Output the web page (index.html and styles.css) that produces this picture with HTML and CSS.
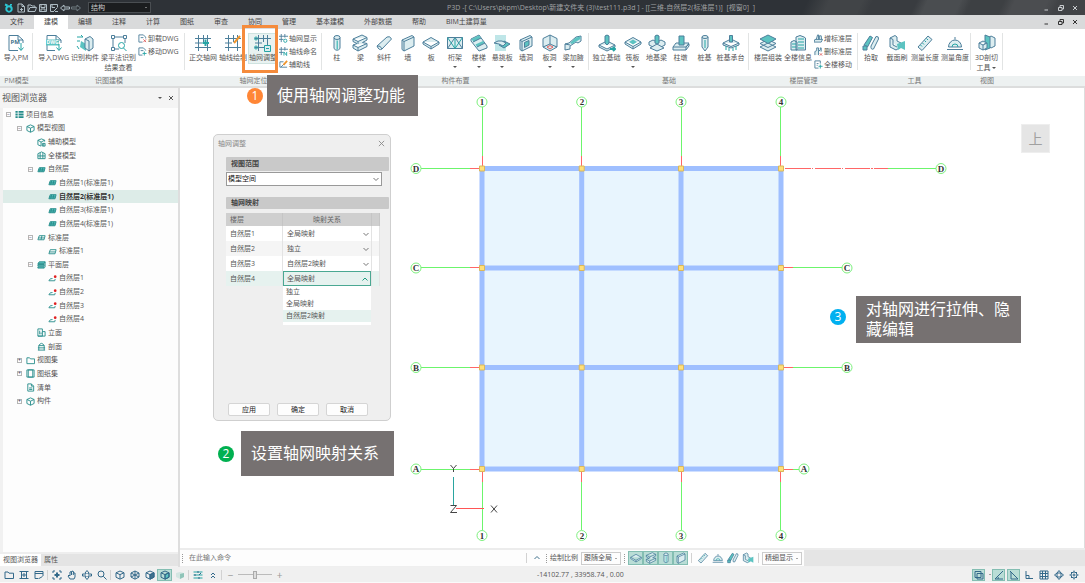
FILE: index.html
```
<!DOCTYPE html>
<html lang="zh-CN">
<head>
<meta charset="utf-8">
<title>P3D</title>
<link rel="stylesheet" href="styles.css">
</head>
<body>
<svg class="defs" aria-hidden="true">
  <symbol id="chev" viewBox="0 0 8 8"><path d="M1.500 3L4 5.500 6.500 3"/></symbol>
  <symbol id="cube" viewBox="0 0 10 10"><path d="M5 1L9 2.800V7.200L5 9.200 1 7.200V2.800ZM1 2.800L5 4.600 9 2.800M5 4.600V9"/></symbol>
  <symbol id="layer" viewBox="0 0 10 10"><path class="tl" d="M1 7.500L2.500 3H9L7.800 7.500Z"/><path d="M1.500 5.500H8M4 3L3 7.500M6.500 3L5.500 7.500"/></symbol>
  <symbol id="plan" viewBox="0 0 10 10"><path d="M1 7.500H7.500L8 5.500M1 7.500Q2 4.500 5 5"/><circle class="red" cx="8" cy="3" r="1.500"/></symbol>
  <symbol id="ruler" viewBox="0 0 18 18"><path class="lt" d="M2 13L12 2 16 5.500 6 16.500Z"/><path class="t" d="M4.500 11L6 12.500M6.500 9L8 10.500M8.500 6.500L10 8M10.500 4.500L12 6"/></symbol>
  <symbol id="protractor" viewBox="0 0 18 18"><path class="lt" d="M2.500 13A6.500 7 0 0 1 15.500 13ZM9 5.500V3M1 15.500H17"/><path class="t" d="M6 13A3 3 0 0 1 12 13"/></symbol>
  <symbol id="pick" viewBox="0 0 18 18"><path class="tl" d="M2 11L8 2 10.500 3.500 5.500 13Z"/><path class="lt" d="M9 12L14 2.500Q17 2 16.500 5L11.500 15Q8.500 16 9 12Z"/><path class="tl" d="M1 12H5V16H1Z"/></symbol>
  <symbol id="brush" viewBox="0 0 18 18"><path class="lt" d="M2 4L7 1.500 9 3V7L13 9V13L8 16 2 13ZM2 4L5 5.500V11L9 13"/><path class="tl ns" d="M9 10L17 7V16L13 14 10 16Z"/></symbol>
  <symbol id="column" viewBox="0 0 18 18"><path class="lt" d="M6 3.500V14.500Q9 18 12 14.500V3.500"/><ellipse class="lt" cx="9" cy="3.500" rx="3" ry="2"/><path class="tl ns" d="M8.500 6.500H10V15.500H8.500Z"/></symbol>
  <symbol id="beam" viewBox="0 0 18 18"><path class="lt" d="M2 5L11 1 16 3.500V6L11.500 8.500 16 9.500V12.500L7 17 2 14V11L6 9.500 2 7.500ZM2 5L7 7.500 16 3.500M7 7.500V10M2 11L7 13.500 16 9.500M7 13.500V17"/></symbol>
  <symbol id="slab" viewBox="0 0 18 18"><path class="lt" d="M1 8L9 3.500 17 8V10L9 15 1 10ZM1 8L9 12.500 17 8M9 12.500V15"/></symbol>
  <symbol id="wall" viewBox="0 0 18 18"><path class="lt" d="M3 6L13 1.500 15 3V12L5 17 3 15.500ZM3 6L5 7.500V17M5 7.500L15 3"/></symbol>
  <symbol id="axis" viewBox="0 0 10 10"><path d="M0 2.500H10M0 6H5M2.500 0V9M6.500 0V4"/></symbol>
  <symbol id="grid" viewBox="0 0 18 18"><path d="M1 4.500H17M1 13.500H17M4.500 1V17M13.500 1V17M9.500 1V8M1 9H8"/></symbol>
  <symbol id="folder" viewBox="0 0 10 10"><path d="M1 2H4L5 3.200H9.500V8.500H1Z"/></symbol>
  <symbol id="doc" viewBox="0 0 10 10"><path d="M2 1H6L8.500 3.500V9H2ZM6 1V3.500H8.500M3.500 5.500H7M3.500 7.200H7"/></symbol>
</svg>

<header class="titlebar">
  <nav class="quick" aria-label="快速访问">
    <svg class="logo" viewBox="0 0 10 10"><path d="M1 1.500L3.500 2.500M5 6m-2.700 0a2.700 2.700 0 1 0 5.400 0a2.700 2.700 0 1 0 -5.400 0M7 1V2.500"/></svg>
    <button aria-label="新建"><svg viewBox="0 0 10 10"><path d="M2 1H6L8.500 3.500V9H2ZM6 1V3.500H8.500M4 6.500H7M5.500 5V8"/></svg></button>
    <button aria-label="打开"><svg viewBox="0 0 10 10"><path d="M1 8.500V2H4L5 3H8V4.500M1 8.500L3 4.500H9.500L8 8.500Z"/></svg></button>
    <button aria-label="保存"><svg viewBox="0 0 10 10"><path d="M1.500 1.500H8.500V8.500H1.500ZM3 1.500V4.500H7V1.500M3 8.500V6H7V8.500"/></svg></button>
    <button aria-label="另存为"><svg viewBox="0 0 10 10"><path d="M8.500 4V1.500H1.500V8.500H5M3 1.500V4.500H6M5 8L8.500 4.500M6 8.500H9"/></svg></button>
    <button aria-label="撤销"><svg viewBox="0 0 10 10"><path d="M.5 5L4 2V4H9.500V6H4V8Z"/></svg></button>
    <button aria-label="重做" class="dim"><svg viewBox="0 0 10 10"><path d="M9.500 5L6 2V4H.5V6H6V8Z"/></svg></button>
  </nav>
  <span class="pick dark"><select aria-label="专业"><option>结构</option></select><i></i></span>
  <h1>P3D -[ C:\Users\pkpm\Desktop\新建文件夹 (3)\test111.p3d ] - [[三维-自然层2(标准层1)]&nbsp; [视窗0]&nbsp; ]</h1>
  <div class="win light">
    <button aria-label="最小化"><svg viewBox="0 0 8 8"><path d="M1.500 6H5"/></svg></button>
    <button aria-label="还原"><svg viewBox="0 0 8 8"><path d="M1.500 3.500H5V6.500H1.500ZM3 3V1.500H6.500V5H5"/></svg></button>
    <button aria-label="关闭"><svg viewBox="0 0 8 8"><path d="M2 2L6 6M6 2L2 6"/></svg></button>
  </div>
</header>

<nav class="menu">
  <a href="#">文件</a><a href="#" class="on">建模</a><a href="#">编辑</a><a href="#">注释</a><a href="#">计算</a><a href="#">图纸</a><a href="#">审查</a><a href="#">协同</a><a href="#">管理</a><a href="#">基本建模</a><a href="#">外部数据</a><a href="#">帮助</a><a href="#">BIM土建算量</a>
  <div class="win">
    <button aria-label="最小化视图"><svg viewBox="0 0 8 8"><path d="M1.500 6H5"/></svg></button>
    <button aria-label="还原视图"><svg viewBox="0 0 8 8"><path d="M1.500 3.500H5V6.500H1.500ZM3 3V1.500H6.500V5H5"/></svg></button>
    <button aria-label="关闭视图"><svg viewBox="0 0 8 8"><path d="M2 2L6 6M6 2L2 6"/></svg></button>
  </div>
</nav>

<div class="ribbon">
  <section class="g g1"><div class="tools">
    <button class="tool"><svg class="ic" viewBox="0 0 18 18"><path d="M11 16.500H2V1.500H11L16 6V9M11 1.500V6H16"/><text x="3.500" y="10">PM</text><path class="t" d="M14 9V16M11.500 13.500L14 16.500 16.500 13.500"/></svg>导入PM</button>
  </div><h2>PM模型</h2></section>

  <section class="g g2"><div class="tools">
    <button class="tool"><svg class="ic" viewBox="0 0 18 18"><path d="M10 16.500H2V1.500H11L16 6V9M11 1.500V6H16"/><path class="tl ns" d="M1 5.500H14V11.500H1Z"/><text class="w" x="1.500" y="10.200">DWG</text><path class="t" d="M14 10V16M11.500 13.500L14 16.500 16.500 13.500"/></svg>导入DWG</button>
    <button class="tool"><svg class="ic" viewBox="0 0 18 18"><path class="t" d="M1 3H7L5 1M1 7H4M3 15L1 12"/><path class="tl ns" d="M5 7L10 10V17L4 13Z"/><path class="lt" d="M9 5L14 2.500 17 5V14L13 17 9 14ZM9 5L13 7V17"/></svg>识别构件</button>
    <button class="tool"><svg class="ic" viewBox="0 0 18 18"><path d="M1.500 1.500H4.500V4.500H1.500ZM13.500 1.500H16.500V4.500H13.500ZM1.500 13.500H4.500V16.500H1.500ZM4.500 3H13.500M3 4.500V13.500M15 4.500V9M4.500 15H9"/><circle class="t" cx="11.500" cy="11.500" r="3"/><path class="t" d="M13.500 14L16.500 17"/></svg>梁平法识别<br>结果查看</button>
    <div class="small">
      <button><svg class="ic" viewBox="0 0 10 10"><path d="M5 9H1V1H6L8.500 3.500V5M3 4H6"/><path class="r" d="M6 6L9 9M9 6L6 9"/></svg>卸载DWG</button>
      <button><svg class="ic" viewBox="0 0 10 10"><path d="M5 9H1V1H6L8.500 3.500V4M3 4H6"/><path class="t" d="M7 5V9.500M5 7.200H9.500"/></svg>移动DWG</button>
    </div>
  </div><h2>识图建模</h2></section>

  <section class="g g3"><div class="tools">
    <button class="tool"><svg class="ic"><use href="#grid"/><path class="t b" d="M11.500 5.500V12M8.500 9H15"/></svg>正交轴网</button>
    <button class="tool"><svg class="ic"><use href="#grid"/><path class="o" d="M10 9L16 2"/></svg>轴线绘制</button>
    <button class="tool on"><svg class="ic"><use href="#grid"/><path class="lt t" d="M10.500 11.500H16.500V17.500H10.500ZM12 14.500H15"/><circle class="t" cx="2" cy="4.500" r="1.500"/><circle class="t" cx="2" cy="13.500" r="1.500"/></svg>轴网调整</button>
    <div class="small">
      <button><svg class="ic" viewBox="0 0 10 10"><use href="#axis"/><circle class="t" cx="7" cy="7.500" r="1.800"/></svg>轴网显示</button>
      <button><svg class="ic" viewBox="0 0 10 10"><use href="#axis"/><path class="t" d="M5.500 9.500V5.500L8.500 9.500V5.500"/></svg>轴线命名</button>
      <button><svg class="ic" viewBox="0 0 10 10"><path d="M1 2H5M1 2V8H9M2 8L6 4"/><path class="o" d="M5 5.500L9 1"/></svg>辅助线</button>
    </div>
  </div><h2>轴网定位</h2></section>

  <section class="g g4"><div class="tools even">
    <button class="tool"><svg class="ic"><use href="#column"/></svg>柱</button>
    <button class="tool"><svg class="ic"><use href="#beam"/></svg>梁</button>
    <button class="tool"><svg class="ic" viewBox="0 0 18 18"><path class="lt" d="M2 12L12 3Q15 1.500 16.500 5L7 15Q4 17 2 12ZM2 12Q5.500 11 7 15"/></svg>斜杆</button>
    <button class="tool"><svg class="ic"><use href="#wall"/></svg>墙</button>
    <button class="tool"><svg class="ic"><use href="#slab"/></svg>板</button>
    <button class="tool"><svg class="ic" viewBox="0 0 18 18"><path class="lt" d="M1.500 3.500H16.500V14.500H1.500Z"/><path d="M1.500 14.500L9 3.500 16.500 14.500"/><path class="t" d="M9 4V14M1.500 3.500L9 14.500 16.500 3.500"/></svg>桁架<i></i></button>
    <button class="tool"><svg class="ic" viewBox="0 0 18 18"><path class="lt" d="M1 5L9 1 17 12V14L9 17 1 7Z"/><path class="tl ns" d="M1.500 5L9 1.500 11 4 3.500 8ZM5.500 10.500L13 7 14.500 9 7 13Z"/><path d="M3 8L11 4M7 13L15 9"/></svg>楼梯<i></i></button>
    <button class="tool"><svg class="ic" viewBox="0 0 18 18"><path class="pale ns" d="M2 1H13V17H2Z"/><path class="tl" d="M6 11L11 7 17 10 11 14Z"/><path class="lt" d="M1 9L5 7H9L13 9 10 12 6 10Z"/></svg>悬挑板<i></i></button>
    <button class="tool"><svg class="ic"><use href="#wall"/><path class="tl" d="M7.500 8.500L12 6.500V11L7.500 13.500Z"/></svg>墙洞</button>
    <button class="tool"><svg class="ic" viewBox="0 0 18 18"><path class="lt" d="M2 4.500L9 1 16 4.500V13L9 17 2 13Z"/><path d="M9 1V10M2 13L9 10 16 13"/><path class="r" d="M6 13L9 11.500 12 13 9 15Z"/></svg>板洞<i></i></button>
    <button class="tool"><svg class="ic" viewBox="0 0 18 18"><path class="lt" d="M1 10L5 9 12 3 17 2V7L14 9 12 8 6 12V15L1 16ZM1 10L6 11"/><path class="tl ns" d="M12 3.500L16.500 2.500V5L8 10 6 9Z"/></svg>梁加腋<i></i></button>
  </div><h2>构件布置</h2></section>

  <section class="g g5"><div class="tools tight">
    <button class="tool"><svg class="ic" viewBox="0 0 18 18"><path class="lt" d="M1 11L9 7 17 11V13L9 17 1 13ZM1 11L9 15 17 11"/><path class="tl" d="M7 2Q9 0 11 2V9L9 11 7 9Z"/><path class="t b" d="M12 15H17M15 13L17 15 15 17"/></svg>独立基础</button>
    <button class="tool"><svg class="ic"><use href="#slab"/><path class="tl ns" d="M5 8L9 5.500 13 8 9 10.500Z"/></svg>筏板<i></i></button>
    <button class="tool"><svg class="ic" viewBox="0 0 18 18"><path class="lt" d="M1 8L5 6 9 8 13 6 17 8V11L13 13 9 11 5 13 1 11Z"/><path class="lt" d="M2 14L9 10 16 14 9 17Z"/><path class="tl" d="M7 2Q9 0 11 2V9L9 10 7 9Z"/></svg>地基梁</button>
    <button class="tool"><svg class="ic" viewBox="0 0 18 18"><path class="lt" d="M1 13L4 9H17L14 13V16H1ZM1 13H14L17 10V12L14 16"/><path class="tl" d="M7 2H12V11H7Z"/></svg>柱墩</button>
    <button class="tool"><svg class="ic" viewBox="0 0 18 18"><path class="lt" d="M6 3V13L9 17 12 13V3"/><ellipse class="lt" cx="9" cy="3" rx="3" ry="1.500"/><path class="t" d="M9 6V14"/></svg>桩基</button>
    <button class="tool"><svg class="ic" viewBox="0 0 18 18"><path class="lt" d="M1 9L9 5 17 9V11L9 14 1 11ZM1 9L9 12.500 17 9"/><path class="tl" d="M7.500 1.500H10.500V8H7.500Z"/><path class="t" d="M4 12V16M7 14V17M11 14V17M14 12V16"/></svg>桩基承台</button>
  </div><h2>基础</h2></section>

  <section class="g g6"><div class="tools">
    <button class="tool"><svg class="ic" viewBox="0 0 18 18"><path class="lt" d="M1 13L9 9 17 13 9 17ZM1 9.500L9 5.500 17 9.500 9 13.500Z"/><path class="tl" d="M1 5L9 1 17 5 9 9.500Z"/></svg>楼层组装</button>
    <button class="tool"><svg class="ic" viewBox="0 0 18 18"><path class="lt" d="M7 16V3Q11 0 15 3L16.500 4V16ZM2 16V8Q5 5 8 8V16Z"/><path class="t" d="M9 5H15M9 8H15M9 11H15M9 14H15M3 10H7M3 13H7"/></svg>全楼信息</button>
    <div class="small">
      <button><svg class="ic" viewBox="0 0 10 10"><path class="lt" d="M1 6H9.500L8 9H0ZM2.500 6L4 1H5V6M6 6V2H8L8.500 6"/></svg>增标准层</button>
      <button><svg class="ic" viewBox="0 0 10 10"><path class="lt" d="M1 9V5L3 4V1H5V9M5 5L7 3V1H8V5"/><path class="r" d="M6.500 7L9 9.500M9 7L6.500 9.500"/></svg>删标准层</button>
      <button><svg class="ic" viewBox="0 0 10 10"><path d="M5 9H1V1H7V4M3 4H5M3 6H4"/><path class="t" d="M7 5V9.500M5 7H9.500"/></svg>全楼移动</button>
    </div>
  </div><h2>楼层管理</h2></section>

  <section class="g g7"><div class="tools tight wide">
    <button class="tool"><svg class="ic"><use href="#pick"/></svg>拾取</button>
    <button class="tool"><svg class="ic"><use href="#brush"/></svg>截面刷</button>
    <button class="tool"><svg class="ic"><use href="#ruler"/></svg>测量长度</button>
    <button class="tool"><svg class="ic"><use href="#protractor"/></svg>测量角度</button>
  </div><h2>工具</h2></section>

  <section class="g g8"><div class="tools">
    <button class="tool"><svg class="ic" viewBox="0 0 18 18"><path class="lt" d="M10 4L13 2 17 4V12L13 14 10 12Z"/><path class="tl" d="M7 1L12 3V14L7 16Z"/><path class="lt" d="M1 9L5 7 9 9V14L5 16 1 14ZM1 9L5 11 9 9M5 11V16"/></svg><span>3D剖切<br>工具 <i class="in"></i></span></button>
  </div><h2>视图</h2></section>
  <div class="rest"></div>
</div>

<main>
  <aside>
    <div class="phead"><h2>视图浏览器</h2><button aria-label="菜单"><i class="caret"></i></button><button aria-label="关闭面板"><svg viewBox="0 0 8 8"><path d="M2 2L6 6M6 2L2 6"/></svg></button></div>
    <ul class="tree">
      <li class="l0"><b class="tg">−</b><svg viewBox="0 0 10 10"><path class="fl1" d="M.5 1H3V3H.5ZM.5 4H3V6H.5ZM.5 7H3V9H.5ZM4 1H9.500V3H4ZM4 4H9.500V6H4ZM4 7H9.500V9H4Z"/></svg>项目信息</li>
      <li class="l1"><b class="tg">−</b><svg><use href="#cube"/></svg>模型视图</li>
      <li class="l2"><b></b><svg viewBox="0 0 10 10"><path d="M8.500 4V2.500L5 1 1 2.500V7.500L4.500 9M1 2.500L4.500 4.500 8.500 2.500M4.500 4.500V9M6 6H9V9H6ZM7.500 6V9"/></svg>辅助模型</li>
      <li class="l2"><b></b><svg viewBox="0 0 10 10"><path d="M1 3L5 1 9 3V8.500H1ZM1 5.500H9M3.500 2V8.500M6.500 2V8.500"/></svg>全楼模型</li>
      <li class="l2"><b class="tg">−</b><svg><use href="#layer"/></svg>自然层</li>
      <li class="l3"><b></b><svg><use href="#layer"/></svg>自然层1(标准层1)</li>
      <li class="l3 sel"><b></b><svg><use href="#layer"/></svg>自然层2(标准层1)</li>
      <li class="l3"><b></b><svg><use href="#layer"/></svg>自然层3(标准层1)</li>
      <li class="l3"><b></b><svg><use href="#layer"/></svg>自然层4(标准层1)</li>
      <li class="l2"><b class="tg">−</b><svg viewBox="0 0 10 10"><path d="M1 7.500L2.500 3H9L7.800 7.500ZM1.500 5.500H8M5.500 3L4.500 7.500"/></svg>标准层</li>
      <li class="l3"><b></b><svg viewBox="0 0 10 10"><path d="M1 7.500L2.500 3H9L7.800 7.500ZM1.500 5.500H8"/></svg>标准层1</li>
      <li class="l2"><b class="tg">−</b><svg viewBox="0 0 10 10"><path class="tl" d="M1 4L2.500 2H9L8 4ZM1 5H8V6.500H1ZM1 7.500H8V9H1ZM9 2V8"/></svg>平面层</li>
      <li class="l3"><b></b><svg><use href="#plan"/></svg>自然层1</li>
      <li class="l3"><b></b><svg><use href="#plan"/></svg>自然层2</li>
      <li class="l3"><b></b><svg><use href="#plan"/></svg>自然层3</li>
      <li class="l3"><b></b><svg><use href="#plan"/></svg>自然层4</li>
      <li class="l2"><b></b><svg viewBox="0 0 10 10"><path d="M1 1H6V9H1ZM6 4H9V9H1M3 3V7M4.500 5V7"/></svg>立面</li>
      <li class="l2"><b></b><svg viewBox="0 0 10 10"><path d="M2 4Q5-1 8 4ZM2 4V9M8 4V9M1 6.500H9M1 9H9"/></svg>剖面</li>
      <li class="l1"><b class="tg">+</b><svg><use href="#folder"/></svg>视图集</li>
      <li class="l1"><b class="tg">+</b><svg viewBox="0 0 10 10"><path d="M2.500 1H7.500V9H2.500ZM1 1V9M9 1V9M1 1H9M1 9H9"/></svg>图纸集</li>
      <li class="l1"><b></b><svg><use href="#doc"/></svg>清单</li>
      <li class="l1"><b class="tg">+</b><svg><use href="#cube"/></svg>构件</li>
    </ul>
    <div class="ptabs"><a href="#" class="on">视图浏览器</a><a href="#">属性</a></div>
  </aside>

  <div class="work">
    <div class="canvas">
      <svg class="drawing" viewBox="180 88 840 461" role="img" aria-label="轴网平面">
        <rect class="floor" x="482" y="168" width="299" height="301"/>
        <path class="bar" d="M479 168.500H784M479 268H784M479 367.500H784M479 469H784M482 166V472M581.700 166V472M681 166V472M781 166V472"/>
        <path class="gl" d="M482.500 107V156M581.500 107V156M681.500 107V156M780.500 107V156M482.500 482V530M581.500 482V530M681.500 482V530M780.500 482V530M421 168.500H470M421 267.500H470M421 367.500H470M421 469.500H470M888 168.500H936M793 267.500H842M793 367.500H842M793 469.500H799"/>
        <path class="rl" d="M482.500 156V166M581.500 156V166M681.500 156V166M780.500 156V166M482.500 472V482M581.500 472V482M681.500 472V482M780.500 472V482M470 168.500H479M470 267.500H479M470 367.500H479M470 469.500H479M784 267.500H793M784 367.500H793M784 469.500H793M785 168.500H811M812 168.500H813M815 168.500H841M842 168.500H843M845 168.500H870M871 168.500H873M874 168.500H888"/>
        <path class="node" d="M479.500 166h5v5h-5zM579.200 166h5v5h-5zM678.500 166h5v5h-5zM778.500 166h5v5h-5zM479.500 265.500h5v5h-5zM579.200 265.500h5v5h-5zM678.500 265.500h5v5h-5zM778.500 265.500h5v5h-5zM479.500 365h5v5h-5zM579.200 365h5v5h-5zM678.500 365h5v5h-5zM778.500 365h5v5h-5zM479.500 466.500h5v5h-5zM579.200 466.500h5v5h-5zM678.500 466.500h5v5h-5zM778.500 466.500h5v5h-5z"/>
        <g class="bub"><circle cx="482" cy="102" r="5"/><circle cx="581.700" cy="102" r="5"/><circle cx="681" cy="102" r="5"/><circle cx="781" cy="102" r="5"/><circle cx="482" cy="535.500" r="5"/><circle cx="581.700" cy="535.500" r="5"/><circle cx="681" cy="535.500" r="5"/><circle cx="781" cy="535.500" r="5"/><circle cx="416" cy="168.500" r="5"/><circle cx="416" cy="268" r="5"/><circle cx="416" cy="367.500" r="5"/><circle cx="416" cy="469" r="5"/><circle cx="941" cy="168.500" r="5"/><circle cx="847" cy="268" r="5"/><circle cx="847" cy="367.500" r="5"/><circle cx="804" cy="469" r="5"/></g>
        <g class="lab"><text x="482" y="105">1</text><text x="582" y="105">2</text><text x="681" y="105">3</text><text x="781" y="105">4</text><text x="482" y="539">1</text><text x="582" y="539">2</text><text x="681" y="539">3</text><text x="781" y="539">4</text><text x="416" y="172">D</text><text x="416" y="271">C</text><text x="416" y="371">B</text><text x="416" y="472">A</text><text x="941" y="172">D</text><text x="847" y="271">C</text><text x="847" y="371">B</text><text x="804" y="472">A</text></g>
        <path class="ay" d="M453.500 477V506"/><path class="ax" d="M456 508.500H484"/>
        <path class="xyz" d="M450.500 465L453.500 468.500 456.500 465M453.500 468.500V472M450.500 505.500H456.500L450.500 512.500H457M491 505.500L497 512.500M497 505.500L491 512.500"/>
      </svg>
      <button class="viewcube">上</button>
    </div>
    <div class="cmd">
      <div class="cmdin"><i class="grip"></i><input aria-label="命令" placeholder="在此输入命令"></div>
      <div class="cmdtools">
        <i class="sep"></i>
        <button class="c16" aria-label="展开"><svg viewBox="0 0 8 8"><path d="M1.500 5L4 2.500 6.500 5"/></svg></button>
        <i class="grip"></i><label for="scale">绘制比例</label>
        <span class="pick box"><select id="scale"><option>跟随全局</option></select><i></i></span>
        <i class="grip"></i>
        <div class="togs">
        <button class="on" aria-label="板"><svg class="ic"><use href="#slab"/></svg></button><button class="on" aria-label="梁"><svg class="ic"><use href="#beam"/></svg></button><button class="on" aria-label="柱"><svg class="ic"><use href="#column"/></svg></button><button class="on" aria-label="墙"><svg class="ic"><use href="#wall"/></svg></button></div>
        <i class="sep"></i>
        <div class="togs">
        <button aria-label="测量长度"><svg class="ic"><use href="#ruler"/></svg></button><button aria-label="测量角度"><svg class="ic"><use href="#protractor"/></svg></button><button aria-label="拾取"><svg class="ic"><use href="#pick"/></svg></button><button aria-label="截面刷"><svg class="ic"><use href="#brush"/></svg></button></div>
        <i class="sep"></i>
        <span class="pick box"><select aria-label="显示精度"><option>精细显示</option></select><i></i></span>
      </div>
    </div>
  </div>
</main>

<footer>
  <div class="fl">
    <button aria-label="打开"><svg><use href="#folder"/></svg></button>
    <button aria-label="框架"><svg viewBox="0 0 10 10"><path d="M2.500 1V9M7.500 1V9M.5 1.500H9.500M.5 8.500H9.500M4 4H6V6H4Z"/></svg></button>
    <button aria-label="窗口"><svg viewBox="0 0 10 10"><path d="M1 1.500H9V6M1 1.500V8.500H4.500M1 3.500H9M5 8.500L8.500 6.500"/></svg></button>
    <i class="sep"></i>
    <button aria-label="居中"><svg viewBox="0 0 10 10"><path d="M1 3V1H3M7 1H9V3M9 7V9H7M3 9H1V7"/><path class="b" d="M5 2.500V7.500M2.500 5H7.500"/></svg></button>
    <button aria-label="平移"><svg viewBox="0 0 10 10"><path d="M3 9L1 6 2 5 3 6V2L4 1.500 5 2V1L6.500 1.500V3L8 3V7L7 9ZM4.500 2V5M6.300 3V5"/></svg></button>
    <button aria-label="旋转"><svg viewBox="0 0 10 10"><path d="M5 .5L7 3H6V4H9.500V6H6V7H7L5 9.500 3 7H4V6H.5V4H4V3H3Z"/></svg></button>
    <button aria-label="缩放"><svg viewBox="0 0 10 10"><circle cx="4" cy="4" r="3"/><path d="M6.300 6.300L9.500 9.500"/></svg></button>
    <i class="sep"></i>
    <button aria-label="线框"><svg><use href="#cube"/></svg></button>
    <button aria-label="隐藏线"><svg viewBox="0 0 10 10"><path d="M5 1L9 3V7L5 9.200 1 7V3ZM1 3L9 7M9 3L1 7M5 1V9"/></svg></button>
    <button aria-label="着色"><svg viewBox="0 0 10 10"><path class="dk" d="M5 4.600L9 2.800V7.200L5 9.200Z"/><use href="#cube"/></svg></button>
    <button class="on" aria-label="真实"><svg viewBox="0 0 10 10"><path class="tl" d="M5 4.600L9 2.800V7.200L5 9.200Z"/><use href="#cube"/></svg></button>
    <button aria-label="透明"><svg viewBox="0 0 10 10"><path class="gh" d="M1 3L5 2 9 3V7L5 9 1 7Z"/><path class="gk" d="M5 4L9 3V7L5 9Z"/></svg></button>
    <i class="sep"></i>
    <button aria-label="设置"><svg viewBox="0 0 10 10"><path class="t" d="M.5 2H9.500M.5 5H9.500M.5 8H9.500"/><path d="M5 1V3M2 4V6M6 7V9M6 5L8 3"/></svg></button>
    <button aria-label="收起"><svg viewBox="0 0 10 10"><path d="M3 5L5 3 7 5M3 8L5 6 7 8"/></svg></button>
    <i class="sep"></i>
    <button class="gy" aria-label="缩小">−</button>
    <input type="range" aria-label="缩放比例" value="50">
    <button class="gy" aria-label="放大">+</button>
  </div>
  <output>-14102.77 , 33958.74 , 0.00</output>
  <div class="fr">
    <button class="on" aria-label="视图样式"><svg viewBox="0 0 10 10"><path d="M1 1.500H7V7.500H1ZM3 3.500H9V9H3Z"/></svg></button><span class="pick tiny"><i></i></span>
    <button class="on" aria-label="捕捉"><svg viewBox="0 0 10 10"><path d="M1 9L9 1M1 9H9M4 9Q5 7 3 6"/></svg></button>
    <button class="on" aria-label="极轴"><svg viewBox="0 0 10 10"><path d="M1 1L9 9M2 2V9H9"/></svg></button>
    <button aria-label="正交"><svg viewBox="0 0 10 10"><path d="M2 1V8.500H9M2 5.500H5V8.500"/></svg></button>
    <button aria-label="栅格"><svg viewBox="0 0 10 10"><path d="M1 1H9V9H1ZM3.500 1V9M6.500 1V9M1 3.500H9M1 6.500H9"/></svg></button>
    <button aria-label="工作面"><svg viewBox="0 0 10 10"><path d="M5 .5L7 3H3ZM5 9.500L7 7H3ZM.5 5L3 3V7ZM9.500 5L7 3V7Z"/></svg></button>
    <button aria-label="选项"><svg viewBox="0 0 10 10"><circle cx="5" cy="5" r="3"/><circle cx="5" cy="5" r="1"/><path d="M5 .5V2M5 8V9.500M.5 5H2M8 5H9.500M2 2L3 3M7 7L8 8M8 2L7 3M3 7L2 8"/></svg></button>
  </div>
</footer>

<form class="dialog" role="dialog" aria-label="轴网调整">
  <div class="dhead"><span>轴网调整</span><button type="button" aria-label="关闭对话框"><svg viewBox="0 0 8 8"><path d="M1 1L7 7M7 1L1 7"/></svg></button></div>
  <h3>视图范围</h3>
  <span class="pick range"><select aria-label="视图范围"><option>模型空间</option></select><svg><use href="#chev"/></svg></span>
  <h3 class="second">轴网映射</h3>
  <table>
    <thead><tr><th>楼层</th><th>映射关系</th><th></th></tr></thead>
    <tbody>
    <tr><td>自然层1</td><td><span class="pick"><select aria-label="自然层1"><option>全局映射</option></select><svg><use href="#chev"/></svg></span></td><td></td></tr>
    <tr class="alt"><td>自然层2</td><td><span class="pick"><select aria-label="自然层2"><option>独立</option></select><svg><use href="#chev"/></svg></span></td><td></td></tr>
    <tr><td>自然层3</td><td><span class="pick"><select aria-label="自然层3"><option>自然层2映射</option></select><svg><use href="#chev"/></svg></span></td><td></td></tr>
    <tr class="cur"><td>自然层4</td><td><span class="pick open"><select aria-label="自然层4"><option>全局映射</option></select><svg viewBox="0 0 8 8"><path d="M1.500 5.500L4 3 6.500 5.500"/></svg></span>
      <ul class="list" role="listbox"><li role="option">独立</li><li role="option">全局映射</li><li role="option" class="hit">自然层2映射</li></ul></td><td></td></tr>
    </tbody>
  </table>
  <div class="acts"><button type="button">应用</button><button type="button">确定</button><button type="button">取消</button></div>
</form>

<div class="focus"></div>
<div class="note n1"><b>1</b><p>使用轴网调整功能</p></div>
<div class="note n2"><b>2</b><p>设置轴网映射关系</p></div>
<div class="note n3"><b>3</b><p>对轴网进行拉伸、隐藏编辑</p></div>
</body>
</html>
```
FILE: styles.css
```
* { box-sizing: border-box; }
body {
  margin: 0;
  min-height: 100vh;
  display: flex;
  flex-direction: column;
  position: relative;
  background: #efefef;
  color: #555;
  font: 7px/10px "Open Sans", "Noto Sans CJK SC", sans-serif;
  overflow: hidden;
}
button, select, input { font: inherit; color: inherit; border: 0; padding: 0; margin: 0; background: none; border-radius: 0; }
h1, h2, h3, p, ul { margin: 0; padding: 0; font: inherit; list-style: none; }
a { color: inherit; text-decoration: none; }
svg { fill: none; stroke: currentColor; display: block; flex: none; }
.defs { position: absolute; width: 0; height: 0; }

/* icon paints */
.ic { width: 18px; height: 18px; color: #4d7f9b; }
.lt { fill: #dcedf0; }
.pale { fill: #bfe6e8; }
.tl { fill: #5cc3c1; }
.ns { stroke: none; }
.t { stroke: #25a5a5; }
.r { stroke: #e06060; }
.o { stroke: #f0952c; stroke-width: 2; }
.b { stroke-width: 2; }
.red { fill: #e02020; stroke: none; }
.dk { fill: #41718c; }
.fl1 { fill: #268c8a; stroke: none; }
.gh { fill: #d4e6e2; stroke: none; }
.gk { fill: #8fc4b8; stroke: none; }
.ic text { font-size: 6px; font-weight: 700; fill: #41718c; stroke: none; }
.ic text.w { font-size: 5px; fill: #fff; }

/* drop-downs */
.pick { position: relative; display: flex; align-items: center; }
.pick select { appearance: none; width: 100%; height: 100%; line-height: 10px; outline: 0; }
.pick svg { position: absolute; right: 1px; width: 8px; height: 8px; pointer-events: none; }
.pick i, .tool i, .caret { display: block; width: 0; height: 0; border: 2px solid transparent; border-top-color: currentColor; border-bottom: 0; }
.pick i { position: absolute; right: 3px; border-width: 1px; border-bottom: 0; }

/* title bar */
.titlebar {
  height: 15px;
  display: flex;
  align-items: center;
  padding-left: 3px;
  color: #aebcc4;
  background: linear-gradient(115deg, #2e3237 0 74%, #414447 76% 79%, #393c40 80% 84%, #4a4d50 85% 88%, #3d4043 89% 92%, #4b4d50 93% 96%, #414346 97%);
}
.quick { display: flex; gap: 1px; }
.quick svg { width: 10px; height: 10px; }
.quick .logo { width: 12px; color: #2cc5d2; stroke-width: 2; }
.quick .dim { color: #6f7a80; }
.dark { width: 63px; height: 11px; margin-left: 7px; border: 1px solid #4a4e52; background: #1b1d1f; color: #ccc; }
.dark select { padding-left: 2px; }
.titlebar h1 { flex: 1; text-align: center; color: #a0a2a4; white-space: pre; padding-left: 8px; }
.win { display: flex; gap: 6px; margin-left: auto; padding-right: 6px; color: #333; }
.win svg, .phead svg { width: 8px; height: 8px; }
.light { color: #c9cccf; }

/* menu */
.menu { height: 14px; display: flex; background: #d9dadb; color: #444; align-items: center; }
.menu a { padding: 0 10px; line-height: 14px; white-space: nowrap; }
.menu .on { background: #fff; }

/* ribbon */
.ribbon { height: 59px; display: flex; background: #fff; border-bottom: 2px solid #dcdddd; }
.g { display: flex; flex-direction: column; justify-content: space-between; flex: none; }
.g h2, .rest { background: #edf1f1; text-align: center; color: #777; }
.g h2 { height: 10px; }
.rest { flex: 1; height: 10px; align-self: flex-end; }
.tools { height: 37px; display: flex; gap: 2px; align-items: flex-start; justify-content: center; margin-top: 4px; border-right: 1px solid #e2e4e4; padding-top: 1px; }
.tools.tight { gap: 0; }
.tools.wide { gap: 2px; }
.tools.even { gap: 0; padding-left: 3px; padding-right: 3px; }
.even .tool { flex: 1; }
.tight .tool { min-width: 24px; }
.g1 { width: 33px; }
.g2 { width: 152px; }
.g3 { width: 137px; }
.g4 { width: 267px; }
.g5 { width: 160px; }
.g6 { width: 109px; }
.g7 { width: 113px; }
.g8 { width: 32px; }
.tool { display: flex; flex-direction: column; align-items: center; line-height: 10px; white-space: nowrap; }
.tool .ic { margin-bottom: 1px; }
.tool i { margin-top: 3px; }
.tool .in { display: inline-block; margin: 0; vertical-align: middle; }
.tool.on { background: #e9f2f1; outline: 1px solid #cfe3e0; }
.small { display: flex; flex-direction: column; margin-top: -2px; }
.small button { display: flex; align-items: center; gap: 1px; height: 13px; white-space: nowrap; }
.small .ic { width: 9px; height: 9px; margin: 0; }

/* main */
main { flex: 1; display: flex; min-height: 0; }
aside { width: 180px; display: flex; flex-direction: column; border-right: 2px solid #dedede; background: #f1f1f1; }
.phead { height: 20px; display: flex; align-items: center; gap: 5px; padding: 0 3px 0 2px; background: #f4f4f4; color: #555; }
.phead h2 { font-size: 9px; flex: 1; }
.tree { flex: 1; margin-left: 3px; background: #fdfdfd; display: grid; grid-template-rows: repeat(22, minmax(0, 1fr)); padding-bottom: 144px; }
.tree li { display: flex; align-items: center; white-space: nowrap; }
.tree svg { width: 9px; height: 9px; margin-right: 2px; color: #268c8a; }
.tree b { width: 5px; height: 5px; margin: 0 4px 0 0; flex: none; }
.tree .tg { border: 1px solid #b5b5b5; font: 5px/3px "Open Sans", sans-serif; text-align: center; color: #335; }
.l0 { padding-left: 3px; }
.l1 { padding-left: 14px; }
.l2 { padding-left: 25px; }
.l3 { padding-left: 36px; }
.tree .sel { background: #ddece8; font-weight: 700; color: #333; }
.ptabs { height: 14px; display: flex; background: #e4e4e4; border-top: 2px solid #eee; margin-bottom: 1px; }
.ptabs a { padding: 0 3px; line-height: 12px; }
.ptabs .on { background: #fff; }

.work { flex: 1; display: flex; flex-direction: column; min-width: 0; }
.canvas { flex: 1; position: relative; background: #fff; border-right: 1px solid #ddd; min-height: 0; overflow: hidden; }
.drawing { position: absolute; left: 0; top: 0; width: 840px; height: 461px; }
.floor { fill: #e8f5fe; stroke: none; }
.bar { stroke: #9fbfff; stroke-width: 5; }
.gl { stroke: #6cf56c; }
.rl { stroke: #f66; }
.node { fill: #ffe07a; stroke: #dcb85a; }
.bub { stroke: #7df07d; fill: #fff; }
.lab { fill: #333; stroke: none; font: 700 9px "Liberation Serif", serif; text-anchor: middle; }
.xyz { stroke: #444; }
.ay { stroke: #2aa5a0; }
.ax { stroke: #f55; }
.viewcube { position: absolute; right: 34px; top: 36px; width: 29px; height: 29px; background: #e5e5e5; border: 1px solid #eee; color: #a0a0a0; font-size: 14px; }

.cmd { height: 18px; display: flex; background: #e5e5e5; border-top: 2px solid #ececec; margin-bottom: 1px; }
.cmdin { width: 346px; background: #fdfdfd; display: flex; align-items: center; gap: 6px; padding-left: 2px; }
.cmdin input { flex: 1; outline: 0; }
.cmdin input::placeholder { color: #777; opacity: 1; }
.cmdtools { display: flex; align-items: center; background: #fdfdfd; gap: 3px; padding-right: 2px; }
.grip { width: 1px; height: 9px; border-left: 1px dotted #999; flex: none; }
.sep { width: 1px; height: 10px; background: #d2d2d2; flex: none; }
.c16 { width: 13px; display: grid; place-items: center; color: #41718c; }
.c16 svg { width: 8px; height: 8px; }
.box { width: 40px; height: 13px; border: 1px solid #ccc; }
.box select { padding-left: 2px; }
.togs { display: flex; }
.togs button { width: 15px; height: 14px; display: grid; place-items: center; }
.togs .ic { width: 12px; height: 12px; color: #35708f; }
.togs .on, footer .on { background: #b9ddd6; outline: 1px solid #84beb2; outline-offset: -1px; }

footer { height: 16px; display: flex; align-items: center; background: #f0f0f0; border-bottom: 1px solid #fafafa; }
.fl { display: flex; align-items: center; padding-left: 1px; width: 537px; }
.fl .sep { margin: 0 1px; }
.fl button, .fr button { width: 15px; height: 12px; display: grid; place-items: center; color: #33698a; }
.fl svg, .fr svg { width: 10px; height: 10px; }
.fl button.gy { color: #999; font-size: 10px; }
.fl input { appearance: none; width: 34px; height: 10px; background: linear-gradient(#bbb, #bbb) center / 100% 1px no-repeat; }
.fl input::-webkit-slider-thumb { appearance: none; width: 4px; height: 8px; background: #ddd; border: 1px solid #aaa; }
.fr { display: flex; align-items: center; margin-left: auto; padding-right: 3px; }
.fr button { width: 13px; margin-right: 2px; }
.tiny { width: 5px; height: 5px; }
.tiny i { right: 1px; }

/* dialog */
.dialog { position: absolute; left: 213px; top: 134px; width: 178px; min-height: 287px; display: flex; flex-direction: column; background: #efefef; border: 1px solid #cfcfcf; border-radius: 5px; padding: 0 1px 4px 12px; }
.dhead { display: flex; justify-content: space-between; align-items: center; height: 17px; margin: 0 0 5px -8px; padding-right: 4px; color: #888; }
.dhead svg { width: 7px; height: 7px; }
h3 { background: #c9c9c9; padding-left: 5px; height: 14px; line-height: 14px; border-radius: 1px; }
.dialog h3 { font-weight: 700; color: #444; }
.dialog h3.second { height: 12px; line-height: 12px; margin: 11px 0 4px; }
.range { width: 156px; height: 14px; margin-top: 1px; background: #fff; border: 1px solid #999; color: #111; }
.range select { padding-left: 1px; }
.pick svg { color: #777; }
table { border-spacing: 0; width: 154px; table-layout: fixed; }
th, td { padding: 0; height: 15px; font-weight: 400; border-right: 1px solid #e3e3e3; }
th { background: #cfcfcf; height: 13px; border-color: #c5c5c5; color: #666; }
th:first-child { width: 57px; text-align: left; padding-left: 4px; }
th:last-child { width: 8px; }
td { background: #fff; position: relative; }
td:first-child { padding-left: 4px; }
.alt td { background: #f5f5f5; }
.cur td { background: #e6f2ef; }
td .pick { height: 15px; }
td .pick select { padding-left: 4px; }
td .open { border: 1px solid #4aa892; }
.open svg { color: #1f9c80; }
td .open select { padding-left: 3px; }
.list { position: absolute; left: 0; top: 15px; width: 88px; background: #fff; padding-bottom: 3px; z-index: 1; }
.list li { padding-left: 3px; line-height: 12px; }
.hit { background: #e6f2ef; }
.acts { display: flex; gap: 7px; margin: auto 0 0 2px; }
.acts button { width: 42px; height: 13px; background: #fdfdfd; border: 1px solid #d5d5d5; border-radius: 2px; color: #222; }

/* annotations */
.focus { position: absolute; left: 242px; top: 25px; width: 36px; height: 48px; border: 3px solid #f58b3c; }
.note { position: absolute; display: flex; align-items: center; color: #fff; font: 16px/20px "Open Sans", "Noto Sans CJK SC", sans-serif; }
.note b { width: 16px; height: 16px; border-radius: 50%; font: 12px/16px "Open Sans", sans-serif; text-align: center; }
.note p { background: #767171; padding: 0 10px; }
.n1 { left: 247px; top: 75px; gap: 4px; }
.n1 b { background: #ff8636; }
.n1 p { padding: 10px 13px 11px 10px; }
.n2 { left: 218px; top: 431px; gap: 7px; }
.n2 b { background: #00b050; }
.n2 p { padding: 12px 15px 13px 10px; }
.n3 { left: 830px; top: 296px; gap: 10px; }
.n3 b { background: #00b0f0; margin-bottom: 5px; }
.n3 p { width: 165px; padding: 3px 10px 4px; }
```
